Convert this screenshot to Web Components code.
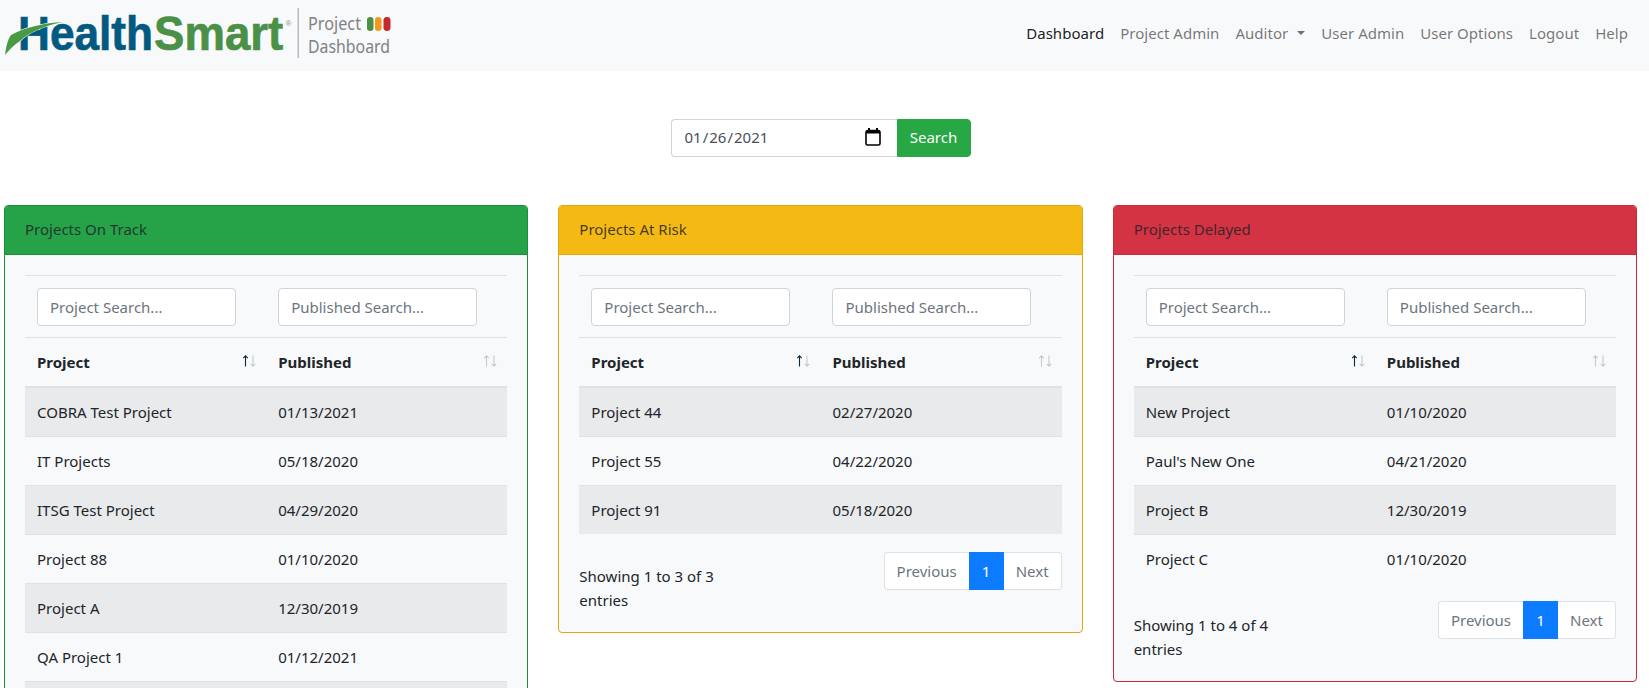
<!DOCTYPE html>
<html lang="en">
<head>
<meta charset="utf-8">
<title>Project Dashboard</title>
<style>
html, body { margin: 0; height: 100%; overflow: hidden; background: #fff; }
body {
  font-family: "Noto Sans", "Open Sans", sans-serif;
  font-size: 15px;
  line-height: 24px;
  color: #212529;
}
</style>
</head>
<body>
<hs-navbar>
  <hs-logo slot="brand"></hs-logo>
  <a class="active" href="#">Dashboard</a>
  <a href="#">Project Admin</a>
  <a class="dropdown" href="#">Auditor</a>
  <a href="#">User Admin</a>
  <a href="#">User Options</a>
  <a href="#">Logout</a>
  <a href="#">Help</a>
</hs-navbar>
<dash-main>
  <date-search slot="search" value="2021-01-26"></date-search>
  <project-card tone="green" list-data='[["COBRA Test Project","01/13/2021"],["IT Projects","05/18/2020"],["ITSG Test Project","04/29/2020"],["Project 88","01/10/2020"],["Project A","12/30/2019"],["QA Project 1","01/12/2021"],["&nbsp;","&nbsp;"]]'>Projects On Track</project-card>
  <project-card tone="yellow" list-data='[["Project 44","02/27/2020"],["Project 55","04/22/2020"],["Project 91","05/18/2020"]]' paged>Projects At Risk</project-card>
  <project-card tone="red" list-data='[["New Project","01/10/2020"],["Paul&#39;s New One","04/21/2020"],["Project B","12/30/2019"],["Project C","01/10/2020"]]' paged>Projects Delayed</project-card>
</dash-main>

<script>
class HsLogo extends HTMLElement {
  constructor() {
    super();
    this.attachShadow({ mode: "open" });
    this.shadowRoot.innerHTML = `<style>
:host { display: block; width: 400px; height: 71px; }
svg { display: block; }
</style>
<svg width="400" height="71" viewBox="0 0 400 71">
  <g font-family="'Liberation Sans', sans-serif" font-weight="700" font-size="49" stroke-width=".7">
    <text transform="translate(18 50) scale(.902 1)" fill="#035a80" stroke="#035a80">Health</text>
    <text transform="translate(154 50) scale(.93 1)" fill="#4a9047" stroke="#4a9047">Smart</text>
  </g>
  <path d="M5 55 C6 46 8 39 11 35 C25 27 45 23 63 22 C48 25 30 31 20 41 C13 46 9 50 5 55Z" fill="#4a9a45" stroke="#f8f9fa" stroke-width="1.2" paint-order="stroke"/>
  <text x="285.500" y="26" font-family="'Liberation Sans', sans-serif" font-size="8" fill="#8a8f92">®</text>
  <rect x="297.500" y="8" width="1.500" height="50" fill="#b9bcbc"/>
  <g font-family="'Noto Sans', sans-serif" font-size="18" fill="#7f8284">
    <text x="308" y="30" textLength="53" lengthAdjust="spacingAndGlyphs">Project</text>
    <text x="308" y="53" textLength="82" lengthAdjust="spacingAndGlyphs">Dashboard</text>
  </g>
  <rect x="367" y="17" width="6.500" height="14" rx="3.200" fill="#4a9047"/>
  <rect x="375" y="17" width="6.500" height="14" rx="3.200" fill="#f39a1e"/>
  <rect x="383.500" y="17" width="7" height="14" rx="3.400" fill="#c6282d"/>
</svg>`;
  }
}
customElements.define("hs-logo", HsLogo);

class HsNavbar extends HTMLElement {
  constructor() {
    super();
    this.attachShadow({ mode: "open" });
    this.shadowRoot.innerHTML = `<style>
:host { display: flex; height: 71px; background: #f8f9fa; padding-right: 13px; box-sizing: border-box; }
nav { display: flex; margin-left: auto; padding-top: 13px; height: 40px; }
</style>
<slot name="brand"></slot>
<nav id="links"></nav>`;
  }

  connectedCallback() {
    // links come in as plain children, turn them into nav-link elements
    const links = this.shadowRoot.getElementById("links");
    [...this.querySelectorAll("a")].forEach((a) => {
      const item = document.createElement("nav-link");
      item.textContent = a.textContent;
      if (a.classList.contains("active")) item.setAttribute("active", "");
      if (a.classList.contains("dropdown")) item.setAttribute("dropdown", "");
      links.appendChild(item);
      a.remove();
    });
  }
}
customElements.define("hs-navbar", HsNavbar);

class NavLink extends HTMLElement {
  constructor() {
    super();
    this.attachShadow({ mode: "open" });
    this.shadowRoot.innerHTML = `<style>
:host { display: flex; align-items: center; padding: 8px; color: rgba(0,0,0,.55); letter-spacing: .03px; cursor: pointer; }
:host([active]) { color: rgba(0,0,0,.9); }
.caret { display: none; margin-left: 9px; width: 0; height: 0; border-top: 4.8px solid; border-left: 4.8px solid transparent; border-right: 4.8px solid transparent; }
:host([dropdown]) .caret { display: block; }
</style>
<slot></slot><span class="caret"></span>`;
  }
}
customElements.define("nav-link", NavLink);

class DashMain extends HTMLElement {
  constructor() {
    super();
    this.attachShadow({ mode: "open" });
    this.shadowRoot.innerHTML = `<style>
:host { display: block; padding: 48px 12px 0 4px; }
.search { display: flex; justify-content: center; margin-bottom: 48px; }
.cards { display: grid; grid-template-columns: repeat(3, 1fr); gap: 30px; align-items: start; }
</style>
<div class="search"><slot name="search"></slot></div>
<div class="cards"><slot></slot></div>`;
  }
}
customElements.define("dash-main", DashMain);

class DateSearch extends HTMLElement {
  constructor() {
    super();
    this.attachShadow({ mode: "open" });
    this.shadowRoot.innerHTML = `<style>
:host { display: flex; width: 300px; height: 38px; position: relative; }
input {
  flex: 1; min-width: 0; box-sizing: border-box; height: 38px; padding: 0 12px 2px;
  border: 1px solid #ced4da; border-right: 0; border-radius: 4px 0 0 4px;
  font: inherit; color: #495057; background: #fff; outline: none;
}
input::-webkit-calendar-picker-indicator { opacity: 0; }
.cal { position: absolute; left: 194px; top: 9px; pointer-events: none; }
button {
  width: 74px; height: 38px; padding: 0 0 2px; border: 1px solid #28a745; border-radius: 0 4px 4px 0;
  background: #28a745; color: #fff; font: inherit; cursor: pointer;
}
</style>
<input type="date">
<svg class="cal" width="16" height="18" viewBox="0 0 16 18">
  <path d="M3 0h2v3H3zM11 0h2v3h-2z" fill="#000"/>
  <path d="M1 4.500C1 3.200 1.700 2.500 3 2.500H13C14.300 2.500 15 3.200 15 4.500V15.500C15 16.500 14.500 17 13.500 17H2.500C1.500 17 1 16.500 1 15.500Z" fill="#fff" stroke="#000" stroke-width="1.600"/>
  <rect x="1" y="2.500" width="14" height="3" fill="#000"/>
</svg>
<button>Search</button>`;
  }

  connectedCallback() {
    this.shadowRoot.querySelector("input").value = this.getAttribute("value");
  }
}
customElements.define("date-search", DateSearch);

const sortIcon = (on) => `<svg class="sort" width="15" height="12" viewBox="0 0 15 12">
  <path d="M3.500 11.500V1M1.300 3.200 3.500 .8 5.700 3.200" fill="none" stroke="${on ? "#10283c" : "#c6cacd"}" stroke-width="1.100"/>
  <path d="M11 .5V11M8.800 8.800 11 11.200 13.200 8.800" fill="none" stroke="#c6cacd" stroke-width="1.100"/>
</svg>`;

class ProjectCard extends HTMLElement {
  constructor() {
    super();
    this.attachShadow({ mode: "open" });
    this.shadowRoot.innerHTML = `<style>
:host { display: block; --tone: #26a248; --edge: #1e8e3a; min-width: 0; }
:host([tone="yellow"]) { --tone: #f5b914; --edge: #e0a80f; }
:host([tone="red"]) { --tone: #d33343; --edge: #c62c3c; }
.card { border: 1px solid var(--edge); border-radius: 4px; background: #f8f9fa; overflow: hidden; }
header { background: var(--tone); border-bottom: 1px solid var(--edge); padding: 11px 20px 13px; color: rgba(33,37,41,.85); }
.body { padding: 20px 20px 20px; }
table { width: 100%; border-collapse: collapse; table-layout: fixed; }
th, td { padding: 12px; text-align: left; border-top: 1px solid #dee2e6; }
thead th { font-weight: 700; padding-bottom: 12px; border-bottom: 2px solid #dee2e6; }
thead tr.filters th { padding-bottom: 11px; border-bottom: 0; font-weight: 400; }
tbody tr:first-child td { border-top: 0; }
tbody tr:nth-child(odd) { background: #e9eaec; }
.th { display: flex; justify-content: space-between; align-items: center; margin-right: -3px; }
.sort { margin-top: -3px; }
input {
  display: block; box-sizing: border-box; width: 199px; height: 38px; padding: 0 12px;
  border: 1px solid #ced4da; border-radius: 4px; background: #fff; outline: none;
  font: inherit; color: #495057;
}
input::placeholder { color: #6c757d; opacity: 1; }
.foot { display: flex; justify-content: space-between; align-items: flex-start; margin-top: 18px; }
.info { width: 165px; padding-top: 12px; }
</style>
<div class="card">
  <header><slot></slot></header>
  <div class="body">
    <table>
      <thead>
        <tr class="filters">
          <th><input placeholder="Project Search..."></th>
          <th><input placeholder="Published Search..."></th>
        </tr>
        <tr>
          <th><div class="th">Project${sortIcon(true)}</div></th>
          <th><div class="th">Published${sortIcon(false)}</div></th>
        </tr>
      </thead>
      <tbody></tbody>
    </table>
    <div class="foot"></div>
  </div>
</div>`;
  }

  connectedCallback() {
    const list = JSON.parse(this.getAttribute("list-data"));
    this.shadowRoot.querySelector("tbody").innerHTML = list
      .map((row) => `<tr><td>${row[0]}</td><td>${row[1]}</td></tr>`)
      .join("");
    const foot = this.shadowRoot.querySelector(".foot");
    if (this.hasAttribute("paged")) {
      foot.innerHTML = `<div class="info">Showing 1 to ${list.length} of ${list.length} entries</div><page-nav></page-nav>`;
    } else {
      foot.style.display = "none";
    }
  }
}
customElements.define("project-card", ProjectCard);

class PageNav extends HTMLElement {
  constructor() {
    super();
    this.attachShadow({ mode: "open" });
    this.shadowRoot.innerHTML = `<style>
:host { display: flex; height: 38px; }
a {
  display: flex; align-items: center; justify-content: center; box-sizing: border-box; height: 38px;
  background: #fff; border: 1px solid #dee2e6; color: #6c757d; cursor: pointer;
}
.prev { width: 85px; border-radius: 4px 0 0 4px; border-right: 0; }
.cur { width: 35px; background: #0d7bff; border-color: #0d7bff; color: #fff; }
.next { width: 58px; border-radius: 0 4px 4px 0; border-left: 0; }
</style>
<a class="prev">Previous</a><a class="cur">1</a><a class="next">Next</a>`;
  }
}
customElements.define("page-nav", PageNav);
</script>
</body>
</html>
